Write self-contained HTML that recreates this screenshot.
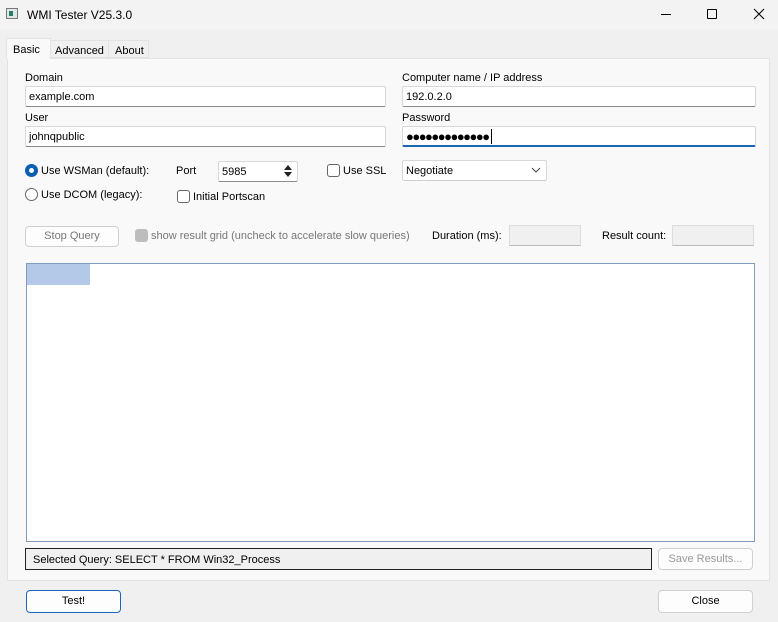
<!DOCTYPE html>
<html><head><style>
*{box-sizing:border-box;margin:0;padding:0}
body{width:778px;height:622px;background:#f0f0f0;font-family:"Liberation Sans",sans-serif;font-size:11px;color:#000;position:relative;overflow:hidden}
.a{position:absolute}
.in{position:absolute;background:#fff;border:1px solid #d8d8d8;border-bottom:1px solid #8a8a8a;border-radius:2px;padding:3px 3px;line-height:14px}
.btn{position:absolute;background:#fdfdfd;border:1px solid #d0d0d0;border-radius:4px;text-align:center}
.cb{position:absolute;width:13px;height:13px;border:1px solid #666;border-radius:3px;background:#fff}
.rd{position:absolute;width:13px;height:13px;border:1px solid #666;border-radius:50%;background:#fff}
</style></head><body>
<div class="a" style="left:0;top:0;width:778px;height:30px;background:#f3f3f3"></div>
<div class="a" style="left:6px;top:8px;width:12px;height:11px;border:1px solid #777;background:#dfe6e6"><div style="margin:2px;width:4px;height:5px;background:#2a7a6a"></div></div>
<div class="a" style="left:27px;top:8px;font-size:12px">WMI Tester V25.3.0</div>
<div class="a" style="left:661px;top:14px;width:10px;height:1px;background:#000"></div>
<div class="a" style="left:707px;top:9px;width:10px;height:10px;border:1px solid #000;border-radius:1px"></div>
<svg class="a" style="left:753px;top:8px" width="12" height="12"><path d="M1 1L11 11M11 1L1 11" stroke="#000" stroke-width="1"/></svg>
<div class="a" style="left:7px;top:58px;width:763px;height:523px;background:#f9f9f9;border:1px solid #e3e3e3"></div>
<div class="a" style="left:6px;top:38px;width:45px;height:21px;background:#f9f9f9;border:1px solid #e3e3e3;border-bottom:none;padding:5px 0 0 6px">Basic</div>
<div class="a" style="left:50px;top:40px;width:59px;height:18px;background:#f0f0f0;border:1px solid #e3e3e3;padding:4px 0 0 4px">Advanced</div>
<div class="a" style="left:108px;top:40px;width:41px;height:18px;background:#f0f0f0;border:1px solid #e3e3e3;padding:4px 0 0 6px">About</div>

<div class="a" style="left:25px;top:72px">Domain</div>
<div class="in" style="left:25px;top:86px;width:361px;height:21px">example.com</div>
<div class="a" style="left:25px;top:112px">User</div>
<div class="in" style="left:25px;top:126px;width:361px;height:21px">johnqpublic</div>
<div class="a" style="left:402px;top:72px">Computer name / IP address</div>
<div class="in" style="left:402px;top:86px;width:354px;height:21px">192.0.2.0</div>
<div class="a" style="left:402px;top:112px">Password</div>
<div class="in" style="left:402px;top:126px;width:354px;height:21px;border-bottom:2px solid #1a66b8;letter-spacing:-1.5px;font-size:13px;line-height:13px">●●●●●●●●●●●●●<span style="border-left:1px solid #000;margin-left:2px"></span></div>

<div class="rd" style="left:25px;top:164px;border:4px solid #0a5fb4"></div>
<div class="a" style="left:41px;top:165px">Use WSMan (default):</div>
<div class="rd" style="left:25px;top:188px"></div>
<div class="a" style="left:41px;top:189px">Use DCOM (legacy):</div>
<div class="a" style="left:176px;top:165px">Port</div>
<div class="in" style="left:218px;top:161px;width:80px;height:21px">5985</div>
<svg class="a" style="left:282px;top:163px" width="12" height="16"><path d="M2 7L6 2L10 7Z M2 9L6 14L10 9Z" fill="#222"/></svg>
<div class="cb" style="left:327px;top:164px"></div>
<div class="a" style="left:343px;top:165px">Use SSL</div>
<div class="cb" style="left:177px;top:190px"></div>
<div class="a" style="left:193px;top:191px">Initial Portscan</div>
<div class="in" style="left:402px;top:160px;width:145px;height:21px;border-bottom-color:#d0d0d0">Negotiate</div>
<svg class="a" style="left:531px;top:167px" width="10" height="7"><path d="M1 1L5 5L9 1" stroke="#444" fill="none"/></svg>

<div class="btn" style="left:25px;top:226px;width:94px;height:21px;color:#777;line-height:19px">Stop Query</div>
<div class="cb" style="left:135px;top:229px;background:#bdbdbd;border-color:#bdbdbd"></div>
<div class="a" style="left:151px;top:230px;color:#777">show result grid (uncheck to accelerate slow queries)</div>
<div class="a" style="left:432px;top:230px">Duration (ms):</div>
<div class="a" style="left:509px;top:225px;width:72px;height:21px;background:#f0f0f0;border:1px solid #ddd;border-bottom-color:#bbb"></div>
<div class="a" style="left:602px;top:230px">Result count:</div>
<div class="a" style="left:672px;top:225px;width:82px;height:21px;background:#f0f0f0;border:1px solid #ddd;border-bottom-color:#bbb"></div>

<div class="a" style="left:26px;top:263px;width:729px;height:279px;background:#fff;border:1px solid #7f9bbd"></div>
<div class="a" style="left:27px;top:264px;width:63px;height:21px;background:#b4c8e8"></div>

<div class="a" style="left:25px;top:548px;width:627px;height:22px;background:#f0f0f0;border:1px solid #222;padding:5px 0 0 7px">Selected Query: SELECT * FROM Win32_Process</div>
<div class="btn" style="left:658px;top:548px;width:95px;height:22px;color:#999;line-height:20px">Save Results...</div>
<div class="btn" style="left:26px;top:590px;width:95px;height:23px;border-color:#1a66b8;line-height:21px">Test!</div>
<div class="btn" style="left:658px;top:590px;width:95px;height:23px;line-height:21px">Close</div>
</body></html>
